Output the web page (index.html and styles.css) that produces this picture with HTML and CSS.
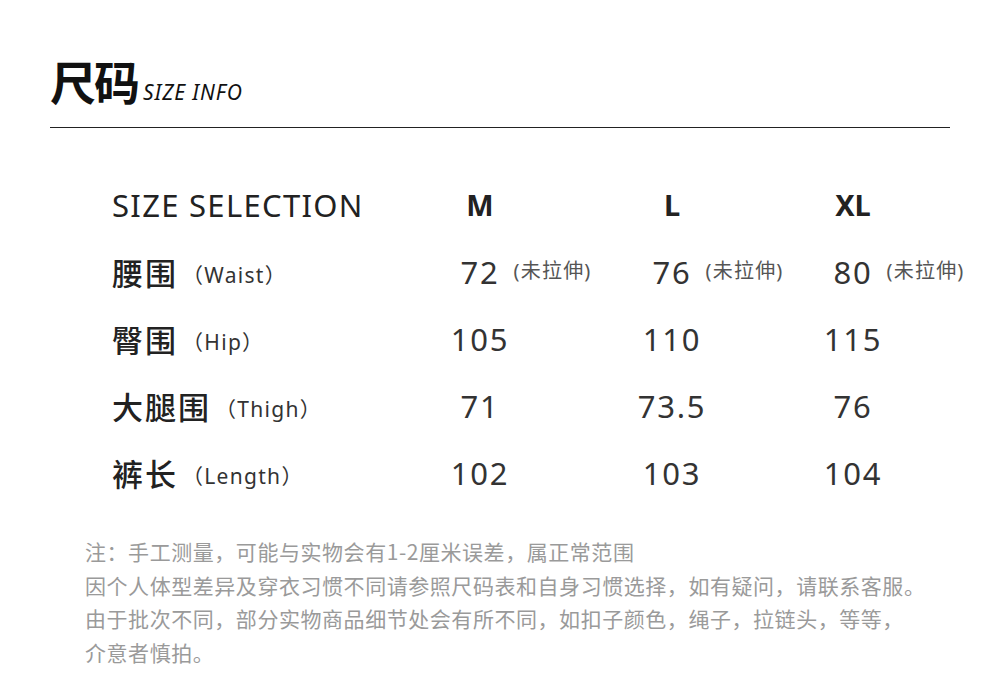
FILE: index.html
```html
<!DOCTYPE html>
<html lang="zh-CN">
<head>
<meta charset="utf-8">
<link rel="stylesheet" href="styles.css">
</head>
<body>
<div class="page">
  <header class="title">
    <h1 class="title-cn">尺码</h1>
    <span class="title-en">SIZE INFO</span>
  </header>
  <div class="table">
    <div class="cell head-label">SIZE SELECTION</div>
    <div class="cell head">M</div>
    <div class="cell head">L</div>
    <div class="cell head">XL</div>

    <div class="cell label"><span class="cn">腰围</span><span class="en">（Waist）</span></div>
    <div class="cell val split"><span></span><span class="num">72</span><span class="note">(未拉伸)</span></div>
    <div class="cell val split"><span></span><span class="num">76</span><span class="note">(未拉伸)</span></div>
    <div class="cell val split"><span></span><span class="num">80</span><span class="note">(未拉伸)</span></div>

    <div class="cell label"><span class="cn">臀围</span><span class="en">（Hip）</span></div>
    <div class="cell val">105</div>
    <div class="cell val">110</div>
    <div class="cell val">115</div>

    <div class="cell label"><span class="cn">大腿围</span><span class="en">（Thigh）</span></div>
    <div class="cell val">71</div>
    <div class="cell val">73.5</div>
    <div class="cell val">76</div>

    <div class="cell label"><span class="cn">裤长</span><span class="en">（Length）</span></div>
    <div class="cell val">102</div>
    <div class="cell val">103</div>
    <div class="cell val">104</div>
  </div>
  <div class="notes">
    <p>注：手工测量，可能与实物会有1-2厘米误差，属正常范围</p>
    <p>因个人体型差异及穿衣习惯不同请参照尺码表和自身习惯选择，如有疑问，请联系客服。</p>
    <p>由于批次不同，部分实物商品细节处会有所不同，如扣子颜色，绳子，拉链头，等等，</p>
    <p>介意者慎拍。</p>
  </div>
</div>
</body>
</html>
```
FILE: styles.css
```css
html, body {
  margin: 0;
  padding: 0;
  background: #ffffff;
}
body {
  font-family: "Noto Sans", "Noto Sans CJK SC", sans-serif;
  color: #222;
}
.page {
  width: 1000px;
  height: 690px;
  overflow: hidden;
}
.title {
  margin: 0 50px;
  height: 127px;
  border-bottom: 1px solid #222;
  box-sizing: content-box;
  display: flex;
  align-items: baseline;
}
.title-cn {
  margin: 0;
  padding-top: 48px;
  font-family: "Noto Sans CJK SC", sans-serif;
  font-size: 46px;
  font-weight: 700;
  line-height: 64px;
  color: #111;
  letter-spacing: -2px;
}
.title-en {
  font-family: "Noto Sans", sans-serif;
  font-style: italic;
  font-size: 21px;
  color: #111;
  margin-left: 5px;
  letter-spacing: 0.9px;
}
.table {
  margin-top: 43px;
  margin-left: 112px;
  display: grid;
  grid-template-columns: 272px 192px 192px 170px;
  grid-auto-rows: 67px;
}
.cell {
  display: flex;
  align-items: center;
}
.head-label {
  font-size: 31px;
  color: #222;
  letter-spacing: 1.3px;
}
.head {
  justify-content: center;
  font-size: 29px;
  font-weight: 700;
  color: #222;
}
.label .cn {
  font-family: "Noto Sans CJK SC", sans-serif;
  font-size: 31px;
  font-weight: 500;
  color: #222;
  letter-spacing: 2px;
}
.label .en {
  font-family: "Noto Sans", "Noto Sans CJK SC", sans-serif;
  font-size: 21px;
  color: #333;
  margin-top: 4px;
  margin-left: 4px;
  letter-spacing: 1.3px;
}
.val {
  justify-content: center;
  font-size: 31px;
  color: #333;
  letter-spacing: 1.8px;
}
.split {
  display: grid;
  grid-template-columns: minmax(0, 1fr) auto minmax(0, 1fr);
  align-items: center;
}
.split .num {
  text-align: center;
}
.note {
  font-family: "Noto Sans", "Noto Sans CJK SC", sans-serif;
  font-size: 20px;
  color: #555;
  white-space: nowrap;
  margin-left: 14px;
  margin-bottom: 4px;
  letter-spacing: 1.2px;
}
.notes {
  margin-top: 29px;
  margin-left: 85px;
  font-family: "Noto Sans CJK SC", sans-serif;
  font-size: 21px;
  color: #9a9a9a;
  line-height: 33.5px;
  letter-spacing: 0.55px;
}
.notes p {
  margin: 0;
  white-space: nowrap;
}
```
